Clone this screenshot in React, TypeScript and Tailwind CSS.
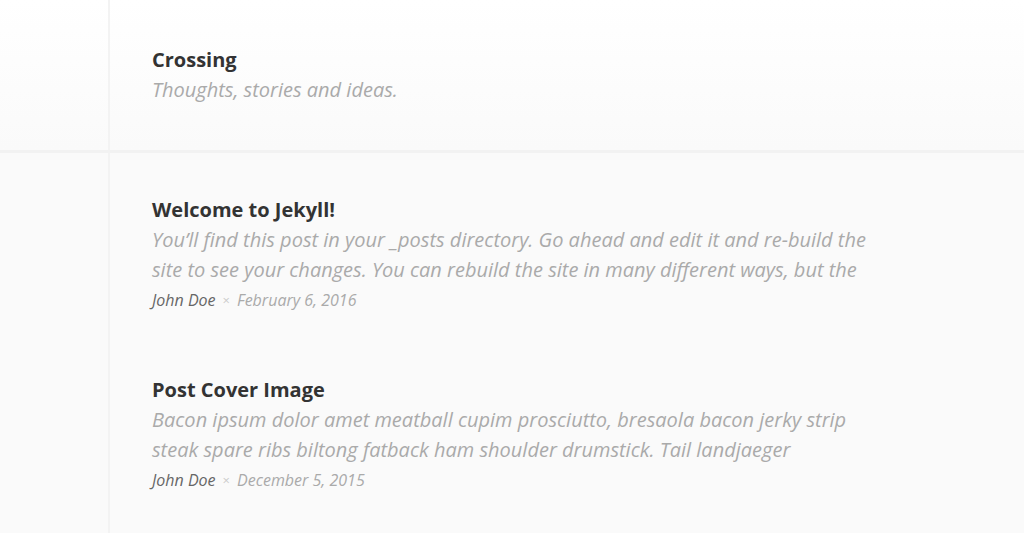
const posts = [
  {
    title: "Welcome to Jekyll!",
    excerpt:
      "You’ll find this post in your _posts directory. Go ahead and edit it and re-build the site to see your changes. You can rebuild the site in many different ways, but the",
    author: "John Doe",
    date: "February 6, 2016",
  },
  {
    title: "Post Cover Image",
    excerpt:
      "Bacon ipsum dolor amet meatball cupim prosciutto, bresaola bacon jerky strip steak spare ribs biltong fatback ham shoulder drumstick. Tail landjaeger",
    author: "John Doe",
    date: "December 5, 2015",
  },
]

export default function App() {
  return (
    <div className="min-h-screen bg-[#fafafa] font-['Open_Sans',sans-serif] text-[#333]">
      <header className="flex bg-gradient-to-b from-white to-[#fafafa] border-b-[3px] border-[#f2f2f2]">
        <div className="w-[110px] shrink-0 border-r-2 border-[#f3f3f3]" />
        <div className="pl-[42px] py-[45px]">
          <h1 className="text-[20px] leading-[30px] font-bold">Crossing</h1>
          <p className="text-[20px] leading-[30px] italic text-[#aaa]">Thoughts, stories and ideas.</p>
        </div>
      </header>
      <div className="flex">
        <div className="w-[110px] shrink-0 border-r-2 border-[#f3f3f3] min-h-[380px]" />
        <main className="pl-[42px] pt-[42px] flex flex-col gap-[60px]">
          {posts.map((p) => (
            <article key={p.title} className="max-w-[720px]">
              <h2 className="text-[20px] leading-[30px] font-bold">{p.title}</h2>
              <p className="text-[20px] leading-[30px] italic text-[#aaa]">{p.excerpt}</p>
              <div className="flex items-center gap-[7px] text-[16px] leading-[30px] italic">
                <span className="text-[#666]">{p.author}</span>
                <span className="text-[#ccc] not-italic text-[13px]">×</span>
                <span className="text-[#aaa]">{p.date}</span>
              </div>
            </article>
          ))}
        </main>
      </div>
    </div>
  )
}
